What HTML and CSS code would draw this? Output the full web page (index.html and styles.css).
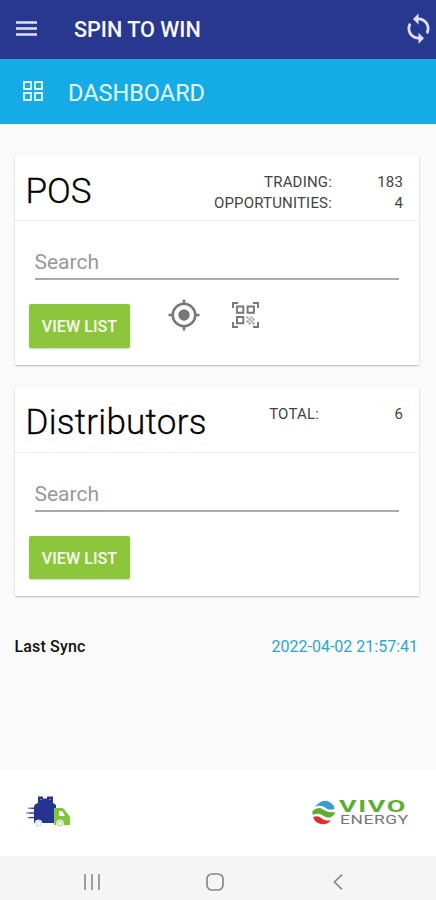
FILE: index.html
```html
<!DOCTYPE html>
<html lang="en">
<head>
<meta charset="utf-8">
<title>Spin to Win</title>
<link rel="stylesheet" href="styles.css">
</head>
<body>
<header class="appbar">
  <svg class="menu" viewBox="0 0 21 15"><path d="M0 1.500h21M0 7.500h21M0 13.500h21" stroke="currentColor" stroke-width="2.4"/></svg>
  <h1 class="app-title">SPIN TO WIN</h1>
  <svg class="sync" viewBox="0 0 24 24" fill="currentColor"><path d="M12 4V1L8 5l4 4V6c3.310 0 6 2.690 6 6 0 1.010-.25 1.970-.7 2.800l1.460 1.460C19.540 15.030 20 13.570 20 12c0-4.420-3.580-8-8-8zm0 14c-3.310 0-6-2.690-6-6 0-1.010.25-1.970.7-2.800L5.240 7.740C4.460 8.970 4 10.430 4 12c0 4.420 3.580 8 8 8v3l4-4-4-4v3z"/></svg>
</header>
<div class="subbar">
  <svg class="grid-icon" viewBox="0 0 20 20" fill="none" stroke="currentColor" stroke-width="1.800"><path d="M1 1h7v7H1zM12 1h7v7h-7zM1 12h7v7H1zM12 12h7v7h-7z"/></svg>
  <h2 class="page-title">DASHBOARD</h2>
</div>
<main class="content">
  <section class="card">
    <div class="card-head">
      <h3 class="card-title">POS</h3>
      <dl class="stats">
        <dt>TRADING:</dt><dd>183</dd>
        <dt>OPPORTUNITIES:</dt><dd>4</dd>
      </dl>
    </div>
    <div class="card-body">
      <div class="search">Search</div>
      <div class="actions">
        <button class="btn">VIEW LIST</button>
        <svg class="locate" viewBox="0 0 32 32" fill="none" stroke="currentColor" stroke-width="2.5"><circle cx="16" cy="16" r="11.3"/><circle cx="16" cy="16" r="5.7" fill="currentColor" stroke="none"/><path d="M16 .5v5M16 26.500v5M.5 16h5M26.500 16h5"/></svg>
        <svg class="qr" viewBox="0 0 27 26" fill="none" stroke="currentColor" stroke-width="1.9"><path d="M1 6V1h5M21 1h5v5M1 20v5h5M21 25h5v-5"/><path d="M5 4.500h6.300v6.300H5zM15.600 4.500h6.300v6.300h-6.300zM5 15h6.300v6.300H5z"/><path d="M14.500 14.500h2v2h-2zM18.500 14.500h2v2h-2zM16.500 16.500h2v2h-2zM20.500 16.500h2v2h-2zM14.500 18.500h2v2h-2zM18.500 18.500h2v2h-2zM16.500 20.500h2v2h-2zM20.500 20.500h2v2h-2z" fill="currentColor" stroke="none" opacity=".75"/></svg>
      </div>
    </div>
  </section>
  <section class="card">
    <div class="card-head">
      <h3 class="card-title distributors">Distributors</h3>
      <dl class="stats">
        <dt class="total">TOTAL:</dt><dd>6</dd>
      </dl>
    </div>
    <div class="card-body">
      <div class="search">Search</div>
      <div class="actions"><button class="btn">VIEW LIST</button></div>
    </div>
  </section>
  <div class="sync-row"><span class="sync-label">Last Sync</span><time class="sync-time">2022-04-02 21:57:41</time></div>
</main>
<footer class="brands">
  <svg class="truck" viewBox="0 0 46 32">
    <path d="M2 12.300h9M0 17h10M4 21.500h8" stroke="#8b93c8" stroke-width="1.5"/>
    <path d="M5 12.300h7M3 17h9M2 21.700h10" stroke="#27348f" stroke-width="1"/>
    <path d="M12 .5h5v2h4v-2h6V7l3 2v18H8V11q0-3 4-4z" fill="#27348f"/>
    <path d="M14 3.500h2M23 3.500h2" stroke="#7882bd" stroke-width="1"/>
    <path d="M28 12h8q2 0 3.500 3l3 4q1.500 1 1.500 3v7H28z" fill="#82c43c"/>
    <path d="M33 15h3l3 5h-6z" fill="#fff"/>
    <g stroke="#fff" stroke-width="1"><circle cx="12.500" cy="27.500" r="3.500" fill="#b9d9ed"/><circle cx="34" cy="27.500" r="3.500" fill="#a9d977"/></g>
    <circle cx="12.500" cy="27.500" r="2" fill="#fff"/><circle cx="34" cy="27.500" r="2" fill="#fff"/>
  </svg>
  <div class="vivo">
    <svg class="vivo-mark" viewBox="0 0 24 26">
      <path d="M3 7Q11-3 19 3q3 2 3.500 6Q17 11 13 7.500 9 4.500 3 7z" fill="#3c9bd0"/>
      <path d="M.5 11Q6 6 11 9.500t12 2.500q-1 4-4 5-4 1.500-8-1.500T1 15Q0 13 .5 11z" fill="#5cae31"/>
      <path d="M1 17q5-2 8 1t10 2.500Q15 25 9 24 3 23 1 17z" fill="#e42c2a"/>
    </svg>
    <div class="vivo-text"><span class="vivo-name">VIVO</span><span class="vivo-sub">ENERGY</span></div>
  </div>
</footer>
<nav class="navbar">
  <svg class="nav-icon recents" viewBox="0 0 16 16"><path d="M1 0v16M8 0v16M15 0v16" stroke="currentColor" stroke-width="1.600"/></svg>
  <svg class="nav-icon home" viewBox="0 0 18 18"><rect x="1" y="1" width="16" height="16" rx="5" fill="none" stroke="currentColor" stroke-width="1.700"/></svg>
  <svg class="nav-icon back" viewBox="0 0 10 16"><path d="M9 .7 1.500 8 9 15.300" fill="none" stroke="currentColor" stroke-width="1.700"/></svg>
</nav>
</body>
</html>
```
FILE: styles.css
```css
* { box-sizing: border-box; }
body {
  margin: 0;
  height: 900px;
  display: flex;
  flex-direction: column;
  overflow: hidden;
  background: #fafafa;
  font-family: Roboto, "Liberation Sans", sans-serif;
  color: #111;
}
h1, h2, h3, dl, dd { margin: 0; }
svg { display: block; flex: none; }
.appbar {
  height: 58.500px;
  display: flex;
  align-items: center;
  padding: 0 1px 2px 16px;
  background: #29388f;
  color: #e0e0fc;
}
.menu { width: 21px; height: 15px; }
.app-title {
  margin-left: 37px;
  padding-top: 4px;
  font-size: 21.600px;
  font-weight: 500;
  line-height: 26px;
  color: #f8f8ff;
}
.sync { width: 33px; height: 33px; margin-left: auto; }
.subbar {
  height: 65px;
  display: flex;
  align-items: center;
  padding-left: 23px;
  background: #14abe6;
  color: #e4fbff;
}
.grid-icon { width: 20px; height: 20px; }
.page-title {
  margin-left: 25px;
  padding-top: 3px;
  font-size: 23.500px;
  font-weight: 400;
  line-height: 28px;
}
.content { padding: 31.500px 17px 0 14.500px; flex: 1; }
.card {
  height: 209.500px;
  margin-bottom: 22px;
  background: #fff;
  border-radius: 1px;
  box-shadow: 0 1px 2px rgba(0, 0, 0, .27);
}
.card-head {
  height: 66px;
  display: flex;
  justify-content: space-between;
  padding: 17px 16px 0 11px;
  border-bottom: 1px solid #eee;
}
.card-title {
  font-size: 35px;
  font-weight: 300;
  line-height: 40px;
  color: #000;
  -webkit-text-stroke: .3px #000;
}
.distributors { margin-top: -1px; letter-spacing: .25px; }
.stats {
  display: grid;
  grid-template-columns: auto 71px;
  grid-auto-rows: 21px;
  align-content: start;
  font-size: 15px;
  letter-spacing: .18px;
  line-height: 21px;
  text-align: right;
  color: #444;
}
.total { padding-right: 13px; }
.card-body { padding: 22px 20px 0; }
.search {
  height: 37px;
  padding: 6px 0 0;
  border-bottom: 2px solid #aaa;
  font-size: 21px;
  line-height: 26px;
  color: #999;
}
.actions { display: flex; margin: 24px 0 0 -5.500px; }
.btn {
  width: 101px;
  height: 43.500px;
  padding: 3px 0 0;
  border: 0;
  border-radius: 2px;
  background: #8bc63c;
  box-shadow: 0 1px 2px rgba(0, 0, 0, .2);
  font: 500 16.200px/20px Roboto, sans-serif;
  color: #f8fff0;
}
.locate { width: 32px; height: 32px; margin: -5px 0 0 37.500px; color: #777; }
.qr { width: 27px; height: 26px; margin: -2px 0 0 32.500px; color: #777; }
.sync-row {
  display: flex;
  justify-content: space-between;
  padding: 18px 1px 0 0;
  font-size: 16px;
  line-height: 22px;
}
.sync-label { font-weight: 500; letter-spacing: .15px; }
.sync-time { color: #2aa8d5; }
.brands {
  height: 86px;
  display: flex;
  justify-content: space-between;
  padding: 26px 26px 0 26px;
  background: #fff;
}
.truck { width: 46px; height: 32px; }
.vivo { display: flex; width: 98px; padding-top: 4px; }
.vivo-mark { width: 24px; height: 26px; }
.vivo-text {
  display: flex;
  flex-direction: column;
  width: 46px;
  margin-left: 3px;
  white-space: nowrap;
}
.vivo-name,
.vivo-sub {
  height: 13px;
  transform-origin: left;
}
.vivo-name {
  font: 700 16px/13px Roboto, sans-serif;
  letter-spacing: 1px;
  transform: scaleX(1.680);
  color: #5cae31;
}
.vivo-sub {
  margin: 1px 0 0 1px;
  font: 400 12px/13px Roboto, sans-serif;
  letter-spacing: .4px;
  transform: scaleX(1.450);
  color: #777;
}
.navbar {
  height: 44px;
  display: flex;
  align-items: center;
  padding: 8px 0 0 84px;
  background: #f5f5f5;
  color: #888;
}
.nav-icon { height: 16px; }
.recents { width: 16px; }
.home { width: 18px; height: 18px; margin-left: 106px; }
.back { width: 10px; margin-left: 109px; }
```
